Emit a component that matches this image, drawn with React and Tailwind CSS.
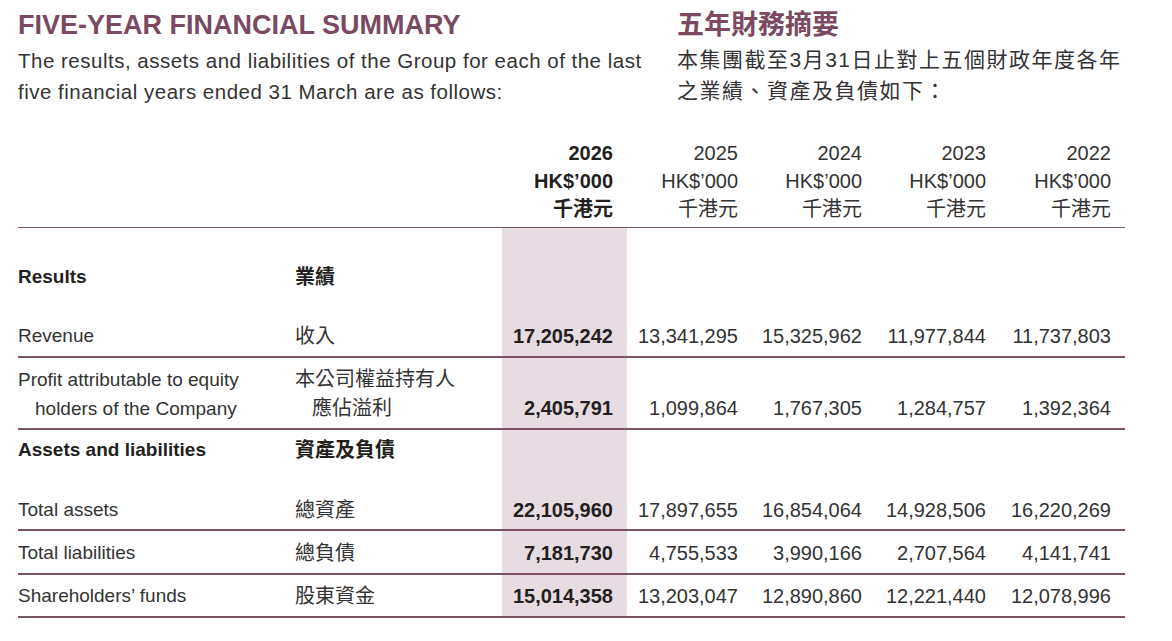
import React from "react";

const grid = "grid grid-cols-[277px_207px_125px_125px_124px_124px_125px]";
const line = "border-b-2 border-[#7e5167]";

const years = ["2026", "2025", "2024", "2023", "2022"];

const rows = [
  { en: "Results", cn: "業績", head: true, pad: "pt-[35px] pb-0", vals: ["", "", "", "", ""] },
  {
    en: "Revenue",
    cn: "收入",
    pad: "pt-[31px] pb-[6px]",
    border: true,
    vals: ["17,205,242", "13,341,295", "15,325,962", "11,977,844", "11,737,803"],
  },
  {
    en: (
      <>
        Profit attributable to equity
        <br />
        <span className="pl-[17px]">holders of the Company</span>
      </>
    ),
    cn: (
      <>
        本公司權益持有人
        <br />
        <span className="pl-[17px]">應佔溢利</span>
      </>
    ),
    pad: "pt-[7px] pb-[5px] leading-[29px]",
    border: true,
    vals: ["2,405,791", "1,099,864", "1,767,305", "1,284,757", "1,392,364"],
  },
  { en: "Assets and liabilities", cn: "資產及負債", head: true, pad: "pt-[6px] pb-0", vals: ["", "", "", "", ""] },
  {
    en: "Total assets",
    cn: "總資產",
    pad: "pt-[32px] pb-[5px]",
    border: true,
    vals: ["22,105,960", "17,897,655", "16,854,064", "14,928,506", "16,220,269"],
  },
  {
    en: "Total liabilities",
    cn: "總負債",
    pad: "pt-[8px] pb-[6px]",
    border: true,
    vals: ["7,181,730", "4,755,533", "3,990,166", "2,707,564", "4,141,741"],
  },
  {
    en: "Shareholders’ funds",
    cn: "股東資金",
    pad: "pt-[7px] pb-[6px]",
    border: true,
    vals: ["15,014,358", "13,203,047", "12,890,860", "12,221,440", "12,078,996"],
  },
];

function Row({ row }) {
  return (
    <div className={`${grid} ${row.border ? line : ""}`}>
      <div className={`${row.pad} text-[19px] ${row.head ? "font-bold text-[#231f20]" : ""}`}>{row.en}</div>
      <div className={`${row.pad} text-[20px] ${row.head ? "font-bold text-[#231f20]" : ""}`}>{row.cn}</div>
      {row.vals.map((v, i) => (
        <div
          key={i}
          className={`${row.pad} flex items-end justify-end pr-[14px] text-[20px] ${
            i === 0 ? "bg-[#e7dce2] font-bold text-[#231f20]" : ""
          }`}
        >
          {v}
        </div>
      ))}
    </div>
  );
}

export default function App() {
  return (
    <div className="w-[1172px] h-[641px] bg-white overflow-hidden font-['Liberation_Sans','Noto_Sans_CJK_TC',sans-serif] text-[#333333]">
      {/* Headings */}
      <div className="flex pt-[8px]">
        <div className="w-[677px] pl-[18px]">
          <h1 className="text-[27px] leading-[34px] font-bold text-[#7b4a62]">FIVE-YEAR FINANCIAL SUMMARY</h1>
          <p className="mt-[3px] text-[20.5px] leading-[31px] tracking-[0.5px]">
            The results, assets and liabilities of the Group for each of the last
            <br />
            five financial years ended 31 March are as follows:
          </p>
        </div>
        <div>
          <h1 className="text-[27px] leading-[34px] font-bold text-[#7b4a62]">五年財務摘要</h1>
          <p className="mt-[2px] text-[21px] leading-[31px] tracking-[1.5px]">
            本集團截至3月31日止對上五個財政年度各年
            <br />
            之業績、資產及負債如下：
          </p>
        </div>
      </div>

      {/* Table */}
      <div className="ml-[18px] mt-[32px] w-[1107px]">
        <div className={`${grid} border-b border-[#7e5167] pb-[4px] text-[20px] leading-[28px]`}>
          <div />
          <div />
          {years.map((y, i) => (
            <div key={y} className={`text-right pr-[14px] ${i === 0 ? "font-bold text-[#231f20]" : ""}`}>
              {y}
              <br />
              HK$’000
              <br />
              千港元
            </div>
          ))}
        </div>
        <div className="leading-[28px]">
          {rows.map((r, i) => (
            <Row key={i} row={r} />
          ))}
        </div>
      </div>
    </div>
  );
}
